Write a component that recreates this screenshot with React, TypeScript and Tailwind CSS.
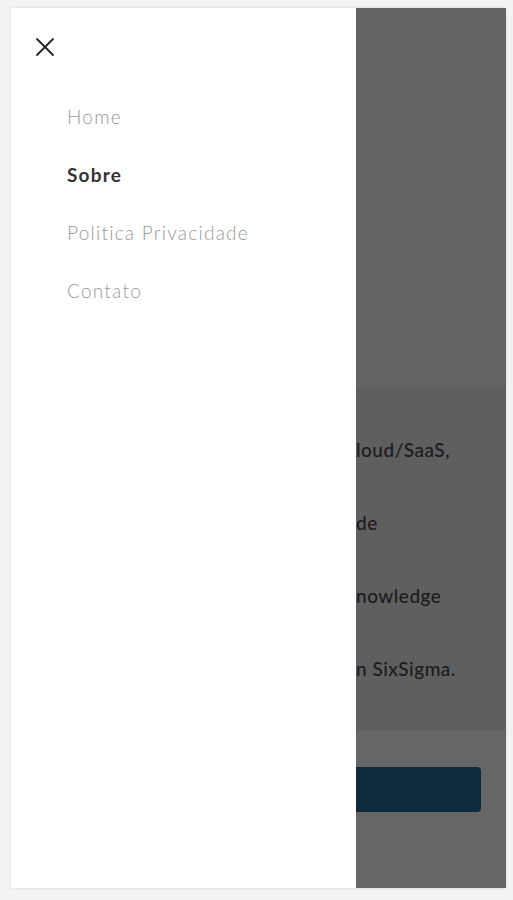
import React from 'react';

const menuItems = [
  { label: 'Home', active: false },
  { label: 'Sobre', active: true },
  { label: 'Politica Privacidade', active: false },
  { label: 'Contato', active: false },
];

const App: React.FC = () => {
  return (
    <div className="min-h-[900px] w-full bg-[#f3f3f3] pt-2 pl-[11px] pr-[7px]" style={{ fontFamily: 'Lato, "Open Sans", sans-serif' }}>
      <div className="relative flex h-[880px] w-full overflow-hidden shadow-[0_0_2px_rgba(0,0,0,0.15)]">
        {/* drawer */}
        <aside className="flex w-[345px] shrink-0 flex-col bg-white">
          <button className="ml-[24px] mt-[29px] flex h-[20px] w-[20px] items-center justify-center" aria-label="Fechar">
            <svg width="20" height="20" viewBox="0 0 20 20" fill="none" stroke="#222" strokeWidth="1.8" strokeLinecap="round">
              <path d="M2 2 L18 18" />
              <path d="M18 2 L2 18" />
            </svg>
          </button>
          <nav className="mt-[48px] flex flex-col gap-[35px] pl-[56px]">
            {menuItems.map((item) => (
              <a
                key={item.label}
                href="#"
                className={
                  item.active
                    ? 'text-[19px] leading-[23px] font-bold tracking-[1.2px] text-[#333]'
                    : 'text-[19px] leading-[23px] font-light tracking-[1.25px] text-[#999]'
                }
              >
                {item.label}
              </a>
            ))}
          </nav>
        </aside>

        {/* page behind the overlay */}
        <main className="flex flex-1 flex-col overflow-hidden">
          <div className="h-[379px] bg-[#646464]" />
          <div className="flex h-[343px] flex-col justify-center gap-[49px] whitespace-nowrap bg-[#5f5f5f] pt-[2px] text-[19px] font-medium leading-[24px] tracking-[0.5px] text-[#1b1b1b]">
            <p>loud/SaaS,</p>
            <p>de</p>
            <p>nowledge</p>
            <p>n SixSigma.</p>
          </div>
          <div className="flex flex-1 flex-col bg-[#666] pt-[37px] pr-[25px]">
            <div className="h-[45px] w-full rounded-r-[4px] bg-[#0f2a3a]" />
          </div>
        </main>
      </div>
    </div>
  );
};

export default App;
